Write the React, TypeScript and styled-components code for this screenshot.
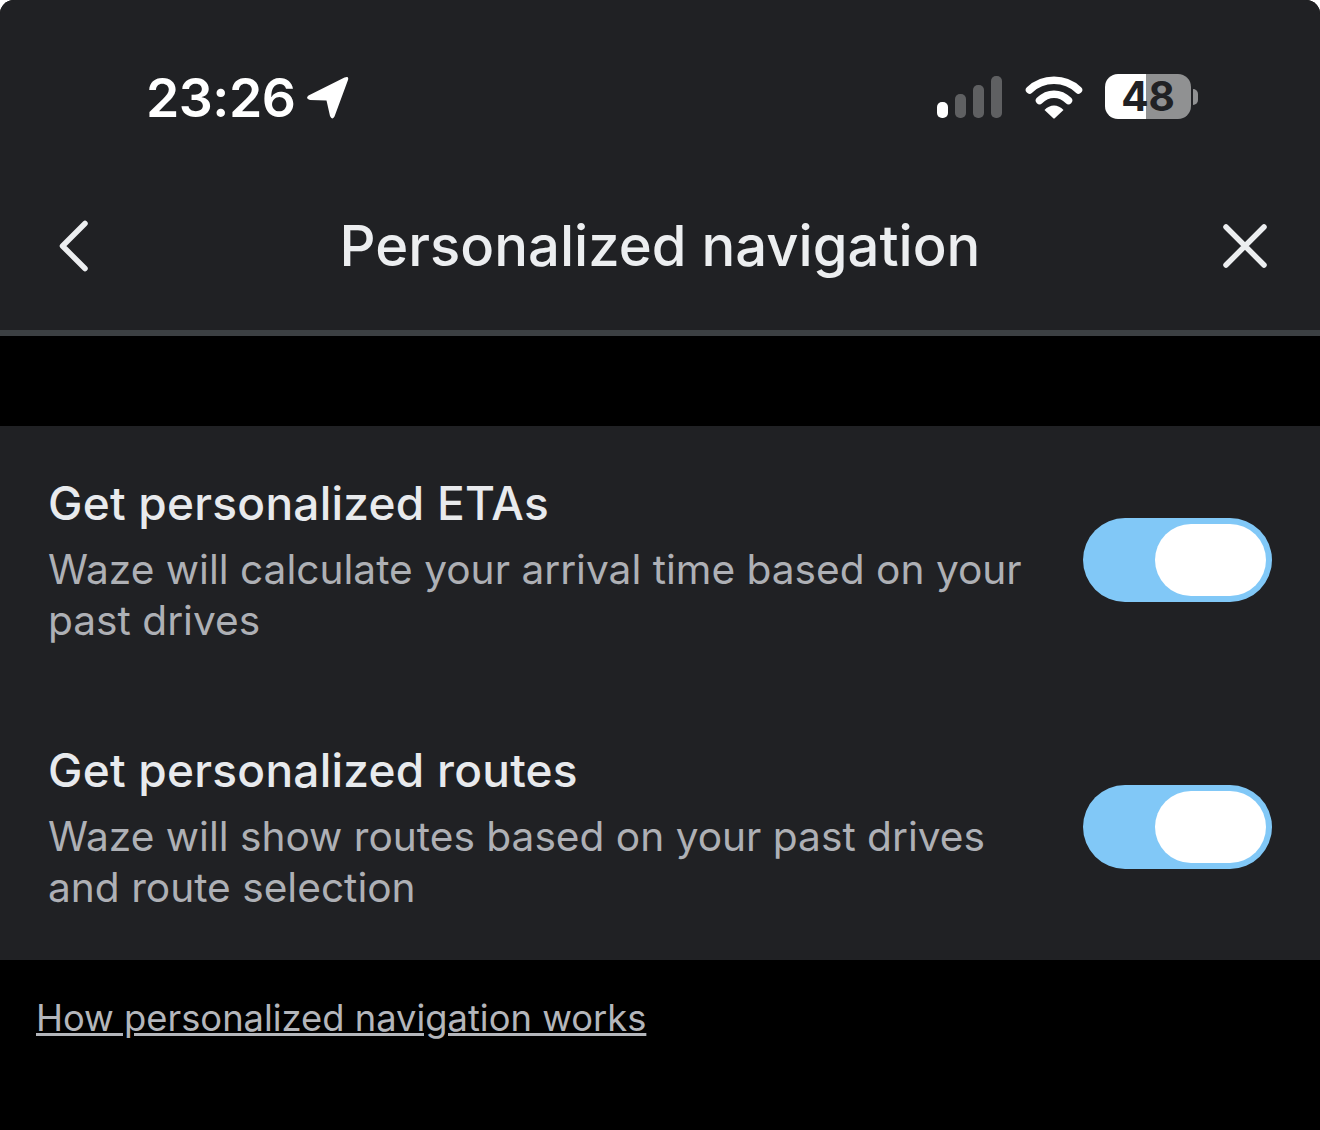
import styled, { createGlobalStyle } from "styled-components";

const rows = [
  {
    title: "Get personalized ETAs",
    text: "Waze will calculate your arrival time based on your past drives",
  },
  {
    title: "Get personalized routes",
    text: "Waze will show routes based on your past drives and route selection",
  },
];

const GlobalStyle = createGlobalStyle`
  html, body {
    margin: 0;
    background: #ffffff;
  }
  body {
    font-family: "Inter", "Liberation Sans", sans-serif;
  }
`;

export default function App() {
  return (
    <>
      <GlobalStyle />
      <Page>
        <Header>
          <StatusBar>
            <Clock>
              <Time>23:26</Time>
              <svg width="44" height="44" viewBox="0 0 44 44">
                <path
                  d="M2.5 19.5 L38.5 1.5 Q43.5 -0.5 41.8 4.5 L28.5 40.5 Q26 44.5 24 40 L20.5 24.5 L4 24 Q-1 22.5 2.5 19.5 Z"
                  fill="#fff"
                />
              </svg>
            </Clock>
            <StatusIcons>
              <svg width="66" height="42" viewBox="0 0 66 42">
                <rect x="0" y="26" width="11" height="16" rx="5" fill="#fff" />
                <rect x="18" y="18" width="11" height="24" rx="5" fill="#5f6062" />
                <rect x="36" y="9" width="11" height="33" rx="5" fill="#5f6062" />
                <rect x="54" y="0" width="11" height="42" rx="5" fill="#5f6062" />
              </svg>
              <svg width="58" height="44" viewBox="0 0 58 44">
                <path
                  d="M4.5 15 C18 2 40 2 53.5 15"
                  stroke="#fff"
                  strokeWidth="7.5"
                  strokeLinecap="round"
                  fill="none"
                />
                <path
                  d="M14.5 25.5 C23 17 35 17 43.5 25.5"
                  stroke="#fff"
                  strokeWidth="7.5"
                  strokeLinecap="round"
                  fill="none"
                />
                <path
                  d="M19.5 35 C25 29 33 29 38.5 35 L30 43 Q29 44 28 43 Z"
                  fill="#fff"
                />
              </svg>
              <Battery>
                <BatteryBody $level={48}>48</BatteryBody>
                <BatteryCap />
              </Battery>
            </StatusIcons>
          </StatusBar>
          <NavBar>
            <BackIcon width="32" height="52" viewBox="0 0 32 52">
              <path
                d="M27 3.5 L4.5 26 L27 48.5"
                stroke="#eceef0"
                strokeWidth="5.5"
                strokeLinecap="round"
                strokeLinejoin="round"
                fill="none"
              />
            </BackIcon>
            <NavTitle>Personalized navigation</NavTitle>
            <CloseIcon width="46" height="46" viewBox="0 0 46 46">
              <path
                d="M4 4 L42 42 M42 4 L4 42"
                stroke="#eceef0"
                strokeWidth="5.5"
                strokeLinecap="round"
                fill="none"
              />
            </CloseIcon>
          </NavBar>
        </Header>
        <Panel>
          {rows.map((row) => (
            <Row key={row.title}>
              <RowText>
                <RowTitle>{row.title}</RowTitle>
                <RowDescription>{row.text}</RowDescription>
              </RowText>
              <Toggle>
                <Knob />
              </Toggle>
            </Row>
          ))}
        </Panel>
        <Footer>
          <HelpLink>How personalized navigation works</HelpLink>
        </Footer>
      </Page>
    </>
  );
}

const Page = styled.div`
  width: 1320px;
  height: 1130px;
  background: #000000;
  border-radius: 14px 14px 0 0;
  overflow: hidden;
`;

const Header = styled.div`
  height: 330px;
  background: #202124;
  border-bottom: 6px solid #3c4043;
`;

const StatusBar = styled.div`
  height: 172px;
  padding: 23px 122px 0 146px;
  box-sizing: border-box;
  display: flex;
  justify-content: space-between;
  align-items: center;
`;

const Clock = styled.div`
  display: flex;
  align-items: center;
  gap: 11px;
`;

const Time = styled.span`
  font-size: 53.5px;
  font-weight: 600;
  color: #ffffff;
  letter-spacing: -0.5px;
`;

const StatusIcons = styled.div`
  display: flex;
  align-items: center;
  gap: 22px;
  margin-top: -2px;
`;

const Battery = styled.div`
  display: flex;
  align-items: center;
  gap: 2px;
`;

const BatteryBody = styled.div<{ $level: number }>`
  width: 86px;
  height: 45px;
  border-radius: 13px;
  background: linear-gradient(
    90deg,
    #ffffff ${(p) => p.$level}%,
    #909192 ${(p) => p.$level}%
  );
  color: #202124;
  font-size: 40.5px;
  font-weight: 700;
  display: flex;
  align-items: center;
  justify-content: center;
`;

const BatteryCap = styled.div`
  width: 5px;
  height: 16px;
  background: #909192;
  border-radius: 0 8px 8px 0;
`;

const NavBar = styled.div`
  height: 148px;
  padding: 0 52px 0 58px;
  display: grid;
  grid-template-columns: 1fr auto 1fr;
  align-items: center;
`;

const BackIcon = styled.svg`
  justify-self: start;
`;

const CloseIcon = styled.svg`
  justify-self: end;
`;

const NavTitle = styled.h1`
  margin: 0;
  font-size: 56.2px;
  font-weight: 500;
  color: #eceef0;
  transform: translateX(-3px);
`;

const Panel = styled.div`
  margin-top: 90px;
  height: 534px;
  box-sizing: border-box;
  padding-top: 46px;
  background: #202124;
`;

const Row = styled.div`
  height: 267px;
  padding: 0 48px;
  display: flex;
  justify-content: space-between;
  gap: 40px;
`;

const RowText = styled.div`
  width: 985px;
`;

const RowTitle = styled.div`
  font-size: 46px;
  line-height: 62px;
  font-weight: 500;
  letter-spacing: 0.25px;
  color: #e8eaed;
`;

const RowDescription = styled.div`
  margin-top: 10px;
  font-size: 40.65px;
  line-height: 51px;
  color: #aeb0b5;
`;

const Toggle = styled.div`
  margin-top: 46px;
  width: 189px;
  height: 84px;
  padding: 6px;
  box-sizing: border-box;
  flex-shrink: 0;
  border-radius: 42px;
  background: #81c8f7;
  display: flex;
  justify-content: flex-end;
`;

const Knob = styled.div`
  width: 111px;
  height: 72px;
  border-radius: 36px;
  background: #ffffff;
`;

const Footer = styled.div`
  padding: 36px 36px 0;
`;

const HelpLink = styled.a`
  font-size: 36.35px;
  line-height: 44px;
  color: #b4b6bb;
  text-decoration: underline;
`;
